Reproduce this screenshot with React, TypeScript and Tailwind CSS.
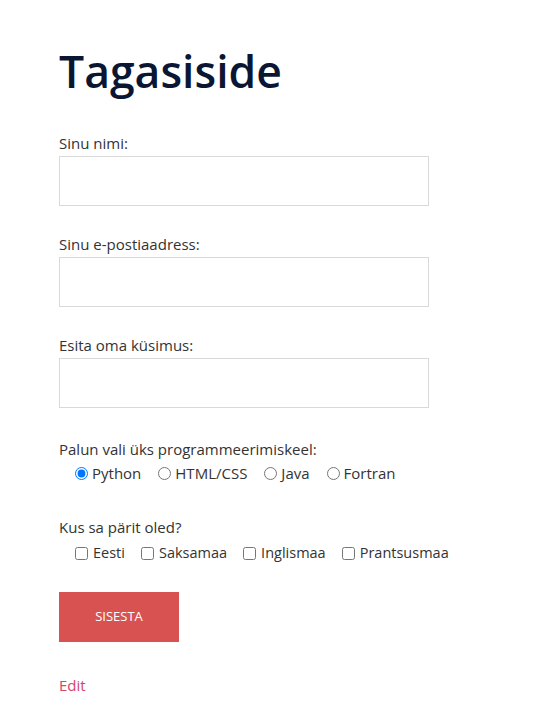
import React from "react";

const languages = ["Python", "HTML/CSS", "Java", "Fortran"];
const countries = ["Eesti", "Saksamaa", "Inglismaa", "Prantsusmaa"];

const Field = ({ label }: { label: string }) => (
  <div className="mb-[26px]">
    <label className="block text-[15px] leading-[24px] text-[#333] mb-px">
      {label}
    </label>
    <input
      type="text"
      className="block w-[370px] h-[50px] border border-[#d9d9d9] bg-white outline-none px-2"
    />
  </div>
);

const App = () => {
  return (
    <div className="min-h-screen bg-white px-[59px] pt-[40px] font-['Open_Sans',sans-serif]">
      <h1 className="text-[44.5px] leading-[62px] font-semibold text-[#0b1633] mb-[29px]">
        Tagasiside
      </h1>

      <form className="flex flex-col items-start" onSubmit={(e) => e.preventDefault()}>
        <Field label="Sinu nimi:" />
        <Field label="Sinu e-postiaadress:" />
        <Field label="Esita oma küsimus:" />

        <div className="mb-[30px] mt-[3px]">
          <p className="text-[15px] leading-[24px] text-[#333]">
            Palun vali üks programmeerimiskeel:
          </p>
          <div className="flex items-center gap-[17px] pl-[16px] text-[15px] leading-[24px] text-[#333]">
            {languages.map((lang, i) => (
              <label key={lang} className="flex items-center gap-1">
                <input
                  type="radio"
                  name="lang"
                  defaultChecked={i === 0}
                  className="m-0 w-[13px] h-[13px]"
                />
                {lang}
              </label>
            ))}
          </div>
        </div>

        <div className="mb-[27px]">
          <p className="text-[15px] leading-[24px] text-[#333] mb-[2px]">
            Kus sa pärit oled?
          </p>
          <div className="flex items-center gap-4 pl-[16px] text-[14.5px] leading-[24px] text-[#333]">
            {countries.map((c) => (
              <label key={c} className="flex items-center gap-[5px]">
                <input type="checkbox" className="m-0 w-[13px] h-[13px]" />
                {c}
              </label>
            ))}
          </div>
        </div>

        <button
          type="submit"
          className="block w-[120px] h-[50px] bg-[#d95252] text-white text-[13px] uppercase"
        >
          Sisesta
        </button>
      </form>

      <a href="#" className="block mt-[31px] text-[15px] leading-[24px] text-[#d6456b]">
        Edit
      </a>
    </div>
  );
};

export default App;
